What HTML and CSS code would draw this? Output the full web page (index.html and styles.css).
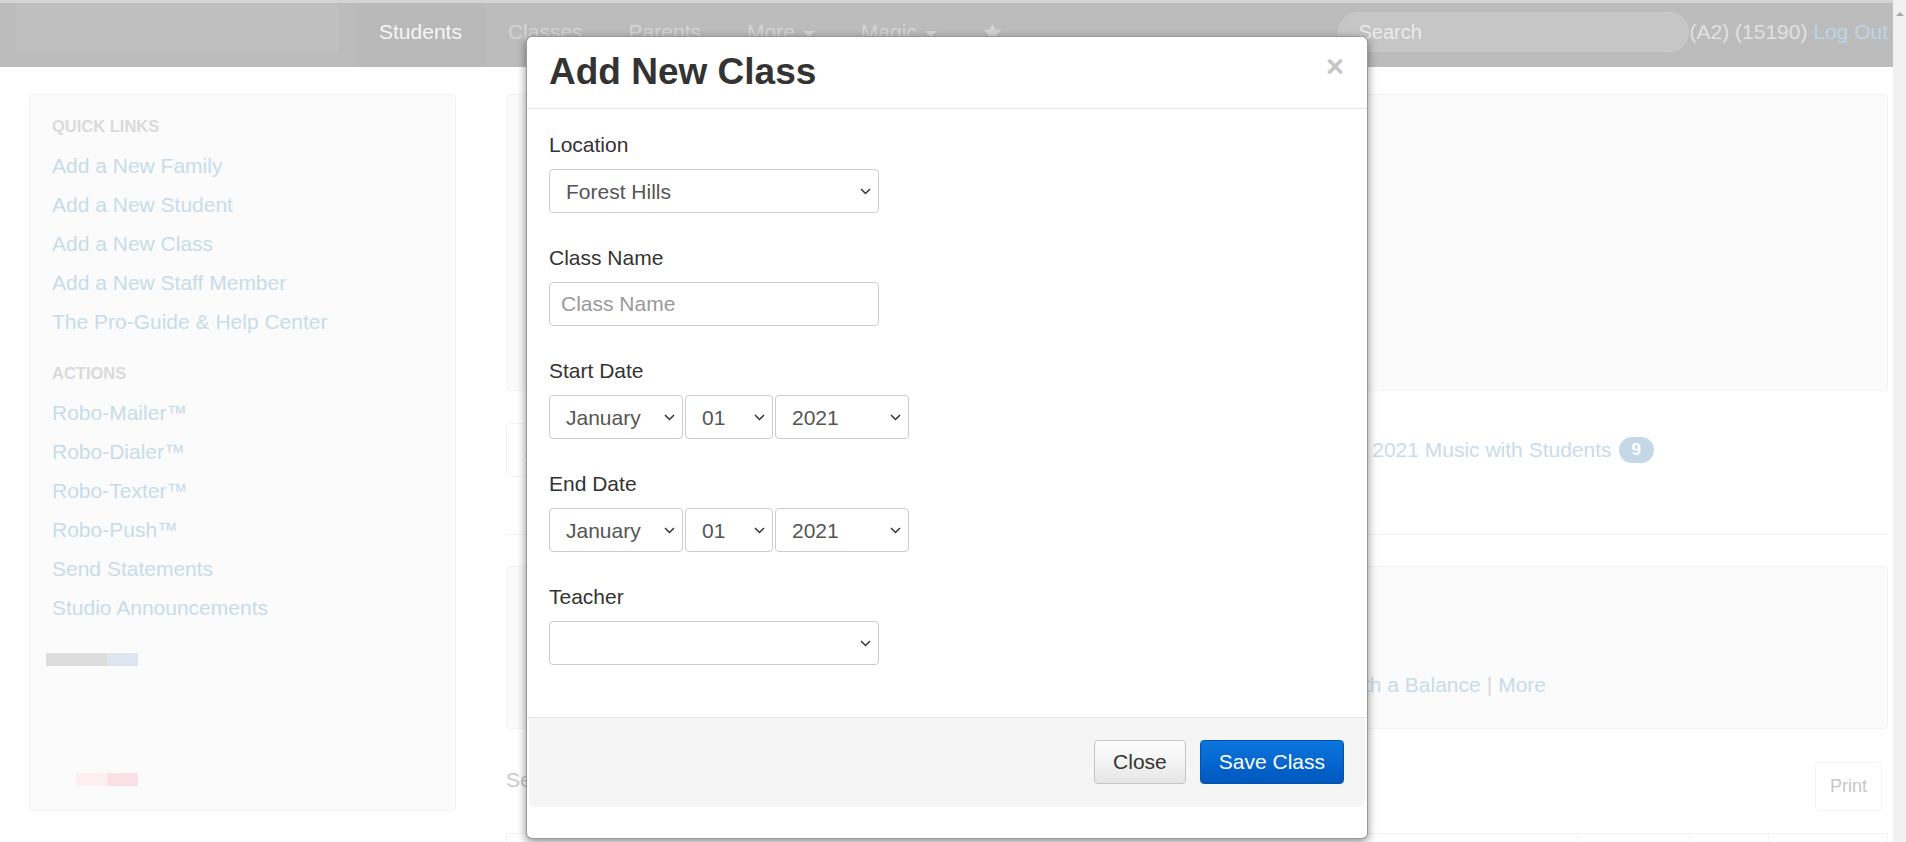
FILE: index.html
```html
<!DOCTYPE html>
<html lang="en">
<head>
    <meta charset="UTF-8">
    <meta name="viewport" content="width=device-width, initial-scale=1.0">
    <title>Add New Class</title>
    <link rel="stylesheet" href="styles.css">
</head>
<body>

    <div class="page">
        <div class="topline"></div>

        <nav class="navbar">
            <div class="brand"></div>
            <ul class="nav">
                <li class="active"><a href="#">Students</a></li>
                <li><a href="#">Classes</a></li>
                <li><a href="#">Parents</a></li>
                <li><a href="#">More <span class="caret"></span></a></li>
                <li><a href="#">Magic <span class="caret"></span></a></li>
                <li>
                    <a href="#" class="star">
                        <svg width="19" height="18" viewBox="0 0 24 23"><path d="M12 0.8l3.4 7.1 7.8 1-5.7 5.4 1.4 7.7L12 18.3l-6.9 3.7 1.4-7.7L0.8 8.9l7.8-1z" fill="#d3d3d3"/></svg>
                    </a>
                </li>
            </ul>
            <div class="nav-right">
                <input class="search" type="text" placeholder="Search">
                <span class="account">(A2) (15190) <a href="#">Log Out</a></span>
            </div>
        </nav>

        <div class="content">
            <!-- Sidebar -->
            <aside class="sidebar">
                <h5 class="side-heading">QUICK LINKS</h5>
                <ul class="side-links">
                    <li>Add a New Family</li>
                    <li>Add a New Student</li>
                    <li>Add a New Class</li>
                    <li>Add a New Staff Member</li>
                    <li>The Pro-Guide &amp; Help Center</li>
                </ul>
                <h5 class="side-heading second">ACTIONS</h5>
                <ul class="side-links">
                    <li>Robo-Mailer™</li>
                    <li>Robo-Dialer™</li>
                    <li>Robo-Texter™</li>
                    <li>Robo-Push™</li>
                    <li>Send Statements</li>
                    <li>Studio Announcements</li>
                </ul>
                <div class="swatch gray-swatch"><span></span><span></span></div>
                <div class="swatch red-swatch"><span></span><span></span></div>
            </aside>

            <!-- Main column -->
            <main class="main">
                <section class="panel summary"></section>

                <section class="class-bar">
                    <div class="class-row">
                        <div class="tab-all">All Classes</div>
                        <div class="class-list">
                            <a href="#">Fall 2021 Music with Students</a>
                            <span class="badge">9</span>
                        </div>
                    </div>
                </section>

                <section class="panel balances">
                    <div class="balance-links">
                        <a href="#">Families with a Balance</a>
                        <span class="sep">|</span>
                        <a href="#">More</a>
                    </div>
                </section>

                <div class="results-row">
                    <span class="results-title">Search Results</span>
                    <button class="print">Print</button>
                </div>

                <div class="table-head">
                    <span></span><span></span><span></span><span></span>
                </div>
            </main>
        </div>
    </div>

    <div class="scrollbar"><span class="arrow-up"></span></div>

    <!-- Modal -->
    <div class="modal">
        <div class="modal-header">
            <h2>Add New Class</h2>
            <button class="close">&times;</button>
        </div>

        <div class="modal-body">
            <div class="form-group">
                <label for="location">Location</label>
                <div class="select-wrap wide">
                    <select id="location"><option>Forest Hills</option></select>
                    <svg class="chevron" width="11" height="7" viewBox="0 0 11 7"><path d="M1 1l4.5 4.5L10 1" fill="none" stroke="#333" stroke-width="1.5"/></svg>
                </div>
            </div>

            <div class="form-group">
                <label for="className">Class Name</label>
                <input id="className" class="text-input" type="text" placeholder="Class Name">
            </div>

            <div class="form-group">
                <label>Start Date</label>
                <div class="date-row">
                    <div class="select-wrap month">
                        <select><option>January</option></select>
                        <svg class="chevron" width="11" height="7" viewBox="0 0 11 7"><path d="M1 1l4.5 4.5L10 1" fill="none" stroke="#333" stroke-width="1.5"/></svg>
                    </div>
                    <div class="select-wrap day">
                        <select><option>01</option></select>
                        <svg class="chevron" width="11" height="7" viewBox="0 0 11 7"><path d="M1 1l4.5 4.5L10 1" fill="none" stroke="#333" stroke-width="1.5"/></svg>
                    </div>
                    <div class="select-wrap year">
                        <select><option>2021</option></select>
                        <svg class="chevron" width="11" height="7" viewBox="0 0 11 7"><path d="M1 1l4.5 4.5L10 1" fill="none" stroke="#333" stroke-width="1.5"/></svg>
                    </div>
                </div>
            </div>

            <div class="form-group">
                <label>End Date</label>
                <div class="date-row">
                    <div class="select-wrap month">
                        <select><option>January</option></select>
                        <svg class="chevron" width="11" height="7" viewBox="0 0 11 7"><path d="M1 1l4.5 4.5L10 1" fill="none" stroke="#333" stroke-width="1.5"/></svg>
                    </div>
                    <div class="select-wrap day">
                        <select><option>01</option></select>
                        <svg class="chevron" width="11" height="7" viewBox="0 0 11 7"><path d="M1 1l4.5 4.5L10 1" fill="none" stroke="#333" stroke-width="1.5"/></svg>
                    </div>
                    <div class="select-wrap year">
                        <select><option>2021</option></select>
                        <svg class="chevron" width="11" height="7" viewBox="0 0 11 7"><path d="M1 1l4.5 4.5L10 1" fill="none" stroke="#333" stroke-width="1.5"/></svg>
                    </div>
                </div>
            </div>

            <div class="form-group">
                <label for="teacher">Teacher</label>
                <div class="select-wrap wide">
                    <select id="teacher"><option></option></select>
                    <svg class="chevron" width="11" height="7" viewBox="0 0 11 7"><path d="M1 1l4.5 4.5L10 1" fill="none" stroke="#333" stroke-width="1.5"/></svg>
                </div>
            </div>
        </div>

        <div class="modal-footer">
            <button class="btn">Close</button>
            <button class="btn btn-primary">Save Class</button>
        </div>
    </div>

</body>
</html>
```

FILE: styles.css
```css
body {
    margin: 0;
    height: 842px;
    overflow: hidden;
    display: flex;
    background-color: #fff;
    font-family: "Liberation Sans", Arial, sans-serif;
    color: #333;
}

a {
    text-decoration: none;
}

.page {
    flex: 1;
    min-width: 0;
}

.topline {
    height: 3px;
    background-color: #d4d4d4;
}

/* Navbar (faded behind the modal) */
.navbar {
    height: 64px;
    display: flex;
    background-color: #bcbcbc;
}

.brand {
    width: 323px;
    height: 49px;
    margin-left: 16px;
    margin-right: 17px;
    background-color: #bfbfbf;
}

.nav {
    display: flex;
    list-style: none;
    margin: 0;
    padding: 0;
}

.nav li a {
    display: flex;
    align-items: center;
    height: 58px;
    padding: 0 23px 6px;
    font-size: 21px;
    color: #d4d4d4;
}

.nav li.active a {
    background-color: #b9b9b9;
    color: #f6f6f6;
}

.caret {
    display: inline-block;
    margin-left: 8px;
    margin-top: 3px;
    border-top: 6px solid #d4d4d4;
    border-left: 6px solid transparent;
    border-right: 6px solid transparent;
}

.nav li a.star {
    padding-bottom: 10px;
}

.nav-right {
    margin-left: auto;
    margin-right: 5px;
    padding-bottom: 6px;
    display: flex;
    align-items: center;
}

.search {
    width: 351px;
    height: 40px;
    box-sizing: border-box;
    padding: 0 20px;
    border: 1px solid #cacaca;
    border-radius: 20px;
    background-color: #c6c6c6;
    font-family: inherit;
    font-size: 20px;
}

.search::placeholder {
    color: #ebebeb;
}

.account {
    margin-left: 1px;
    font-size: 21px;
    color: #e1e1e1;
}

.account a {
    color: #bcd4e6;
}

.scrollbar {
    width: 13px;
    background-color: #f1f1f1;
    display: flex;
    justify-content: center;
}

.arrow-up {
    margin-top: 12px;
    width: 0;
    height: 0;
    border-bottom: 4px solid #a9a9a9;
    border-left: 4px solid transparent;
    border-right: 4px solid transparent;
}

/* Page content */
.content {
    display: flex;
    gap: 50px;
    padding: 27px 5px 0 29px;
}

.sidebar {
    width: 427px;
    height: 717px;
    flex-shrink: 0;
    box-sizing: border-box;
    padding: 12px 22px;
    background-color: #fbfbfb;
    border: 1px solid #f3f3f3;
    border-radius: 4px;
}

.side-heading {
    margin: 0;
    font-size: 16.5px;
    line-height: 39px;
    color: #dadada;
}

.side-heading.second {
    margin-top: 13px;
}

.side-links {
    list-style: none;
    margin: 0;
    padding: 0;
}

.side-links li {
    font-size: 21px;
    line-height: 39px;
    color: #c7dcea;
}

.swatch {
    display: flex;
    height: 13px;
}

.gray-swatch {
    margin: 26px 0 0 -6px;
}

.gray-swatch span:first-child {
    width: 61px;
    background-color: #dddddd;
}

.gray-swatch span:last-child {
    width: 31px;
    background-color: #dfe5ee;
}

.red-swatch {
    margin: 107px 0 0 24px;
}

.red-swatch span:first-child {
    width: 31px;
    background-color: #fdeff1;
}

.red-swatch span:last-child {
    width: 31px;
    background-color: #fbe0e5;
}

.main {
    flex: 1;
    display: flex;
    flex-direction: column;
}

.panel {
    box-sizing: border-box;
    background-color: #fbfbfb;
    border: 1px solid #f3f3f3;
    border-radius: 4px;
}

.summary {
    height: 297px;
}

.class-bar {
    margin-top: 32px;
    height: 112px;
    box-sizing: border-box;
    border-bottom: 1px solid #f2f2f2;
}

.class-row {
    display: flex;
    align-items: center;
    height: 54px;
}

.tab-all {
    height: 54px;
    box-sizing: border-box;
    padding: 0 18px;
    border: 1px solid #f3f3f3;
    border-radius: 4px;
    line-height: 52px;
    font-size: 21px;
    color: #d2d2d2;
}

.class-list {
    margin-left: auto;
    margin-right: 234px;
    display: flex;
    align-items: center;
    font-size: 21px;
}

.class-list a {
    color: #c7dcea;
}

.badge {
    margin-left: 7px;
    height: 26px;
    padding: 0 13px;
    border-radius: 13px;
    background-color: #c4d8e8;
    color: #fff;
    font-size: 17px;
    font-weight: bold;
    line-height: 26px;
}

.balances {
    margin-top: 31px;
    height: 163px;
    display: flex;
    flex-direction: column;
    justify-content: flex-end;
    padding-bottom: 28px;
}

.balance-links {
    display: flex;
    justify-content: flex-end;
    gap: 6px;
    padding-right: 341px;
    font-size: 21px;
    line-height: 30px;
}

.balance-links a {
    color: #c7dcea;
}

.balance-links .sep {
    color: #d6d6d6;
}

.results-row {
    margin-top: 33px;
    height: 49px;
    display: flex;
    justify-content: space-between;
}

.results-title {
    margin-top: 3px;
    font-size: 21px;
    line-height: 30px;
    color: #c9c9c9;
}

.print {
    height: 49px;
    margin-right: 6px;
    padding: 0 14px;
    background-color: #fff;
    border: 1px solid #f3f3f3;
    border-radius: 4px;
    font-family: inherit;
    font-size: 18px;
    color: #c6c6c6;
}

.table-head {
    margin-top: 22px;
    height: 30px;
    display: grid;
    grid-template-columns: 1fr 112px 79px 119px;
    border: 1px solid #f2f2f2;
}

.table-head span + span {
    border-left: 1px solid #f2f2f2;
}

/* Modal */
.modal {
    position: absolute;
    top: 36px;
    left: 526px;
    width: 842px;
    box-sizing: border-box;
    padding-bottom: 31px;
    background-color: #fff;
    border: 1px solid rgba(0, 0, 0, 0.4);
    border-radius: 6px;
    box-shadow: 0 3px 10px rgba(0, 0, 0, 0.45);
}

.modal-header {
    display: flex;
    justify-content: space-between;
    align-items: flex-start;
    padding: 15px 23px 16px 22px;
    border-bottom: 1px solid #e5e5e5;
}

.modal-header h2 {
    margin: 0;
    font-size: 37px;
    line-height: 40px;
    font-weight: bold;
    color: #333;
}

.close {
    padding: 0;
    border: none;
    background: none;
    font-family: inherit;
    font-size: 31px;
    font-weight: bold;
    line-height: 30px;
    color: #c6c6c6;
}

.modal-body {
    padding: 21px 22px 22px;
    border-bottom: 1px solid #e5e5e5;
}

.form-group {
    margin-bottom: 30px;
}

.form-group label {
    display: block;
    margin-bottom: 9px;
    font-size: 21px;
    line-height: 30px;
    color: #333;
}

.select-wrap {
    position: relative;
    display: inline-block;
}

.select-wrap select,
.text-input {
    display: block;
    width: 100%;
    height: 44px;
    box-sizing: border-box;
    background-color: #fff;
    border: 1px solid #ccc;
    border-radius: 4px;
    font-family: inherit;
    font-size: 21px;
    color: #555;
}

.select-wrap select {
    appearance: none;
    padding: 0 30px 0 16px;
}

.chevron {
    position: absolute;
    right: 8px;
    top: 19px;
    pointer-events: none;
}

.wide,
.text-input {
    width: 330px;
}

.text-input {
    padding: 0 11px;
}

.text-input::placeholder {
    color: #999;
}

.date-row {
    display: flex;
    gap: 2px;
}

.month,
.year {
    width: 134px;
}

.day {
    width: 88px;
}

.modal-footer {
    display: flex;
    justify-content: flex-end;
    gap: 14px;
    margin: 0 2px;
    padding: 22px 21px 23px;
    background-color: #f5f5f5;
    border-radius: 0 0 5px 5px;
}

.btn {
    height: 44px;
    padding: 0 18px;
    border: 1px solid #c5c5c5;
    border-radius: 4px;
    background: linear-gradient(#ffffff, #e6e6e6);
    font-family: inherit;
    font-size: 21px;
    color: #333;
    cursor: pointer;
}

.btn-primary {
    border-color: #0552aa;
    background: linear-gradient(#0b76de, #0057bf);
    color: #fff;
}
```
